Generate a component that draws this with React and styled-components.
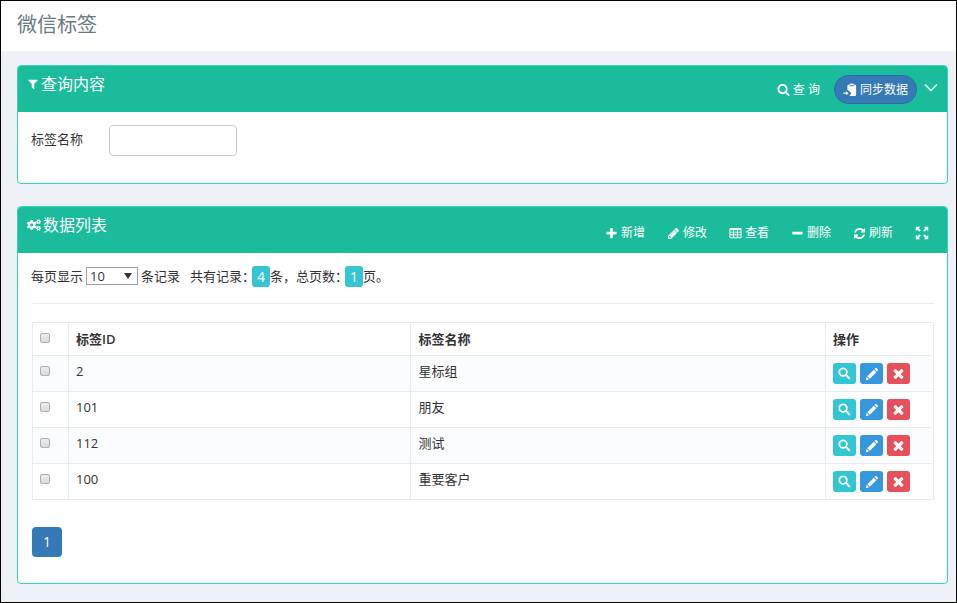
import styled, { createGlobalStyle } from 'styled-components'
import { useState } from 'react'
import { FaCogs } from 'react-icons/fa'

const GlobalStyle = createGlobalStyle`
  * {
    box-sizing: border-box;
  }

  body {
    margin: 0;
    font-family: 'Open Sans', 'Noto Sans CJK SC', sans-serif;
    font-size: 13px;
    line-height: 20px;
    color: #333;
    background: #eef1f5;
  }

  button,
  input,
  select {
    font: inherit;
    color: inherit;
    margin: 0;
  }
`

const Page = styled.div`
  min-height: 100vh;
  border: 1px solid #000;
  background: #eef1f6;
`

const PageHeader = styled.header`
  height: 50px;
  padding: 0 16px;
  display: flex;
  align-items: flex-start;
  background: #fff;
`

const PageTitle = styled.h1`
  margin: 0;
  font-size: 20px;
  line-height: 48px;
  font-weight: 400;
  color: #697882;
`

const Main = styled.main`
  padding: 14px 8px 18px 16px;
  display: flex;
  flex-direction: column;
  gap: 22px;
`

const Panel = styled.section`
  border: 1px solid #36d7b7;
  border-radius: 4px;
  background: #fff;
  overflow: hidden;
`

const PanelHeader = styled.div`
  height: 46px;
  padding: 0 9px;
  display: flex;
  justify-content: space-between;
  background: #1bbc9b;
  color: #fff;
`

const PanelTitle = styled.h2`
  margin: 0;
  padding-top: 5px;
  height: 30px;
  display: flex;
  align-items: center;
  gap: 2px;
  font-size: 16px;
  line-height: 24px;
  font-weight: 400;
`

const Toolbar = styled.div`
  display: flex;
  align-items: center;
  gap: ${(props) => props.$gap}px;
  padding: ${(props) => props.$top}px ${(props) => props.$end}px 0 0;
`

const ToolButton = styled.button`
  display: flex;
  align-items: center;
  gap: 3px;
  padding: 0;
  border: 0;
  background: none;
  color: #fff;
  font-size: 12px;
  line-height: 20px;
  cursor: pointer;
`

const SyncButton = styled(ToolButton)`
  height: 29px;
  padding: 0 8px;
  border: 1px solid #2e6da4;
  border-radius: 25px;
  background: #337ab7;
`

const CollapseButton = styled(ToolButton)`
  height: 42px;
  align-self: flex-start;
`

const SearchTools = styled.div`
  display: flex;
  align-items: center;
  gap: 14px;
`

const PanelBody = styled.div`
  padding: ${(props) => (props.$form ? '13px 13px 27px' : '12px 13px 26px')};
`

const Field = styled.div`
  display: flex;
  align-items: flex-start;
  gap: 26px;
  line-height: 28px;
`

const TextInput = styled.input`
  width: 128px;
  height: 31px;
  padding: 4px 8px;
  border: 1px solid #c2cad8;
  border-radius: 4px;
  background: #fff;
`

const Summary = styled.div`
  display: flex;
  align-items: center;
  height: 22px;
`

const PageSize = styled.label`
  display: flex;
  align-items: center;
  gap: 3px;
  margin-right: 10px;
`

const SelectBox = styled.span`
  display: inline-grid;
  align-items: center;
  justify-items: end;

  & > * {
    grid-area: 1 / 1;
  }
`

const Select = styled.select`
  appearance: none;
  width: 52px;
  height: 18px;
  padding: 0 3px;
  border: 1px solid #a0a0a0;
  border-radius: 0;
  background: #fff;
  line-height: 16px;
`

const SelectArrow = styled.span`
  margin-right: 6px;
  border: 4px solid transparent;
  border-top: 6px solid #333;
  border-bottom: 0;
  pointer-events: none;
`

const Badge = styled.span`
  margin-left: -3px;
  padding: 0 5px;
  border-radius: 3px;
  background: #36c6d3;
  color: #fff;
  font-size: 14px;
  line-height: 21px;
`

const ListContent = styled.div`
  padding-left: 1px;
`

const Divider = styled.hr`
  margin: 16px 0 18px;
  border: 0;
  border-top: 1px solid #eee;
`

const Table = styled.table`
  width: 100%;
  table-layout: fixed;
  border-collapse: collapse;

  th,
  td {
    border: 1px solid #e7ecf1;
    padding: 6px 7px;
    text-align: left;
    vertical-align: top;
  }

  th {
    font-weight: 600;
  }

  td {
    height: 36px;
    padding: 5px 7px;
  }

  tbody tr:nth-child(odd) {
    background: #fbfcfd;
  }
`

const Column = styled.col`
  width: ${(props) => props.$width};
`

const Checkbox = styled.input`
  appearance: none;
  display: block;
  width: 10px;
  height: 10px;
  margin: ${(props) => (props.$head ? 4 : 5)}px 0;
  border: 1px solid #b0b0b0;
  border-radius: 2px;
  background: linear-gradient(#ececec, #dadada);

  &:checked {
    background: #337ab7;
  }
`

const Actions = styled.div`
  display: flex;
  gap: 4px;
  padding: 2px 0;
`

const ActionButton = styled.button`
  display: flex;
  align-items: center;
  justify-content: center;
  width: 23px;
  height: 21px;
  padding: 0;
  border: 0;
  border-radius: 3px;
  background: ${(props) => props.$color};
  color: #fff;
  cursor: pointer;
`

const Pagination = styled.nav`
  display: flex;
  margin-top: 27px;
`

const PageLink = styled.a`
  width: 30px;
  height: 30px;
  border-radius: 4px;
  background: #337ab7;
  color: #fff;
  font-size: 14px;
  line-height: 29px;
  text-align: center;
  text-decoration: none;
`

const paths = {
  search:
    'M1216 832q0-185-131.5-316.5t-316.5-131.5-316.5 131.5-131.5 316.5 131.5 316.5 316.5 131.5 316.5-131.5 131.5-316.5zm512 832q0 52-38 90t-90 38q-54 0-90-38l-343-342q-179 124-399 124-143 0-273.5-55.5t-225-150-150-225-55.5-273.5 55.5-273.5 150-225 225-150 273.5-55.5 273.5 55.5 225 150 150 225 55.5 273.5q0 220-124 399l343 343q37 37 37 90z',
  zoom: 'M700 60a640 640 0 0 1 535 990l440 420q60 60 0 120l-90 90q-60 60-120 0l-420-440A640 640 0 1 1 700 60zM700 300a400 400 0 1 0 0 800 400 400 0 1 0 0-800z',
  pencil:
    'M491 1536l91-91-235-235-91 91v107h128v128h107zm523-928q0-22-22-22-10 0-17 7l-542 542q-7 7-7 17 0 22 22 22 10 0 17-7l542-542q7-7 7-17zm-54-192l416 416-832 832h-416v-416zm683 96q0 53-37 90l-166 166-416-416 166-165q36-38 90-38 53 0 91 38l235 234q37 39 37 91z',
  edit: 'M90 1700l130-430 300 300zM300 1180l830-830 310 310-830 830zM1210 270l130-130q60-50 120 0l190 190q50 60 0 120l-130 130z',
  plus: 'M1600 736v192q0 40-28 68t-68 28h-416v416q0 40-28 68t-68 28h-192q-40 0-68-28t-28-68v-416h-416q-40 0-68-28t-28-68v-192q0-40 28-68t68-28h416v-416q0-40 28-68t68-28h192q40 0 68 28t28 68v416h416q40 0 68 28t28 68z',
  minus:
    'M1600 736v192q0 40-28 68t-68 28h-1216q-40 0-68-28t-28-68v-192q0-40 28-68t68-28h1216q40 0 68 28t28 68z',
  filter:
    'M1595 295q17 41-14 70l-493 493v742q0 42-39 59-13 5-25 5-27 0-45-19l-256-256q-19-19-19-45v-486l-493-493q-31-29-14-70 17-39 59-39h1280q42 0 59 39z',
  refresh:
    'M1639 1056q0 5-1 7-64 268-268 434.5t-478 166.5q-146 0-282.5-55t-243.5-157l-129 129q-19 19-45 19t-45-19-19-45v-448q0-26 19-45t45-19h448q26 0 45 19t19 45-19 45l-137 137q71 66 161 102t187 36q134 0 250-65t186-179q11-17 53-117 8-23 30-23h192q13 0 22.5 9.5t9.5 22.5zm25-800v448q0 26-19 45t-45 19h-448q-26 0-45-19t-19-45 19-45l138-138q-148-137-349-137-134 0-250 65t-186 179q-11 17-53 117-8 23-30 23h-199q-13 0-22.5-9.5t-9.5-22.5v-7q65-268 270-434.5t480-166.5q146 0 284 55.5t245 156.5l130-129q19-19 45-19t45 19 19 45z',
  table:
    'M160 128h1472q96 0 96 96v1216q0 96-96 96H160q-96 0-96-96V224q0-96 96-96zM200 400v240h360V400zM700 400v240h392V400zM1232 400v240h360V400zM200 770v240h360V770zM700 770v240h392V770zM1232 770v240h360V770zM200 1140v256h360v-256zM700 1140v256h392v-256zM1232 1140v256h360v-256z',
  remove:
    'M1490 1322q0 40-28 68l-136 136q-28 28-68 28t-68-28l-294-294-294 294q-28 28-68 28t-68-28l-136-136q-28-28-28-68t28-68l294-294-294-294q-28-28-28-68t28-68l136-136q28-28 68-28t68 28l294 294 294-294q28-28 68-28t68 28l136 136q28 28 28 68t-28 68l-294 294 294 294q28 28 28 68z',
  expand:
    'M100 100h560l-190 190 270 270-180 180-270-270-190 190zM1692 100v560l-190-190-270 270-180-180 270-270-190-190zM100 1692v-560l190 190 270-270 180 180-270 270 190 190zM1692 1692h-560l190-190-270-270 180-180 270 270 190-190z',
  paste:
    'M560 380q0-150 150-150h110q20-170 300-170t300 170h110q150 0 150 150v1130q0 150-150 150H820l250-370-510-420zM840 290v130h560V290zM60 1230h340v-170l330 250-330 250v-170H60z',
}

const Icon = ({ name, size = 13 }) => (
  <svg
    width={size}
    height={size}
    viewBox="0 0 1792 1792"
    fill="currentColor"
    fillRule="evenodd"
    aria-hidden="true"
  >
    <path d={paths[name]} />
  </svg>
)

const tags = [
  { id: 2, name: '星标组' },
  { id: 101, name: '朋友' },
  { id: 112, name: '测试' },
  { id: 100, name: '重要客户' },
]

const tools = [
  { icon: 'plus', label: '新增' },
  { icon: 'pencil', label: '修改' },
  { icon: 'table', label: '查看' },
  { icon: 'minus', label: '删除' },
  { icon: 'refresh', label: '刷新' },
]

const TagRow = ({ tag, checked, onToggle }) => (
  <tr>
    <td>
      <Checkbox
        type="checkbox"
        aria-label={`选择 ${tag.name}`}
        checked={checked}
        onChange={() => onToggle(tag.id)}
      />
    </td>
    <td>{tag.id}</td>
    <td>{tag.name}</td>
    <td>
      <Actions>
        <ActionButton $color="#32c5d2" aria-label="查看">
          <Icon name="zoom" />
        </ActionButton>
        <ActionButton $color="#3598dc" aria-label="修改">
          <Icon name="edit" size={14} />
        </ActionButton>
        <ActionButton $color="#e7505a" aria-label="删除">
          <Icon name="remove" size={15} />
        </ActionButton>
      </Actions>
    </td>
  </tr>
)

const SearchPanel = () => (
  <Panel>
    <PanelHeader>
      <PanelTitle>
        <Icon name="filter" size={12} />
        查询内容
      </PanelTitle>
      <Toolbar $gap={7} $top={1} $end={0}>
        <SearchTools>
          <ToolButton>
            <Icon name="search" />查 询
          </ToolButton>
          <SyncButton>
            <Icon name="paste" size={14} />
            同步数据
          </SyncButton>
        </SearchTools>
        <CollapseButton aria-label="收起">
          <svg width="14" height="10" viewBox="0 0 14 10" aria-hidden="true">
            <path
              d="M1 1.5l6 6 6-6"
              fill="none"
              stroke="#d9f5ee"
              strokeWidth="1.7"
            />
          </svg>
        </CollapseButton>
      </Toolbar>
    </PanelHeader>
    <PanelBody $form>
      <Field>
        <label htmlFor="tagName">标签名称</label>
        <TextInput id="tagName" type="text" />
      </Field>
    </PanelBody>
  </Panel>
)

const ListPanel = () => {
  const [selected, setSelected] = useState([])

  const allSelected = selected.length === tags.length

  function toggle(id) {
    setSelected((ids) =>
      ids.includes(id) ? ids.filter((i) => i !== id) : [...ids, id]
    )
  }

  function toggleAll() {
    setSelected(allSelected ? [] : tags.map((tag) => tag.id))
  }

  return (
    <Panel>
      <PanelHeader>
        <PanelTitle>
          <FaCogs size={14} />
          数据列表
        </PanelTitle>
        <Toolbar $gap={22} $top={6} $end={9}>
          {tools.map((tool) => (
            <ToolButton key={tool.icon}>
              <Icon name={tool.icon} />
              {tool.label}
            </ToolButton>
          ))}
          <ToolButton aria-label="全屏">
            <Icon name="expand" size={14} />
          </ToolButton>
        </Toolbar>
      </PanelHeader>

      <PanelBody>
        <Summary>
          <PageSize>
            每页显示
            <SelectBox>
              <Select defaultValue="10">
                <option>10</option>
                <option>20</option>
                <option>50</option>
              </Select>
              <SelectArrow />
            </SelectBox>
            条记录
          </PageSize>
          共有记录：<Badge>{tags.length}</Badge>条，总页数：<Badge>1</Badge>页。
        </Summary>
        <ListContent>
          <Divider />
          <Table>
            <colgroup>
              <Column $width="36px" />
              <Column $width="38%" />
              <Column />
              <Column $width="108px" />
            </colgroup>
            <thead>
              <tr>
                <th>
                  <Checkbox
                    $head
                    type="checkbox"
                    aria-label="全选"
                    checked={allSelected}
                    onChange={toggleAll}
                  />
                </th>
                <th>标签ID</th>
                <th>标签名称</th>
                <th>操作</th>
              </tr>
            </thead>
            <tbody>
              {tags.map((tag) => (
                <TagRow
                  key={tag.id}
                  tag={tag}
                  checked={selected.includes(tag.id)}
                  onToggle={toggle}
                />
              ))}
            </tbody>
          </Table>
          <Pagination aria-label="分页">
            <PageLink href="#1">1</PageLink>
          </Pagination>
        </ListContent>
      </PanelBody>
    </Panel>
  )
}

const App = () => (
  <>
    <GlobalStyle />
    <Page>
      <PageHeader>
        <PageTitle>微信标签</PageTitle>
      </PageHeader>
      <Main>
        <SearchPanel />
        <ListPanel />
      </Main>
    </Page>
  </>
)

export default App
